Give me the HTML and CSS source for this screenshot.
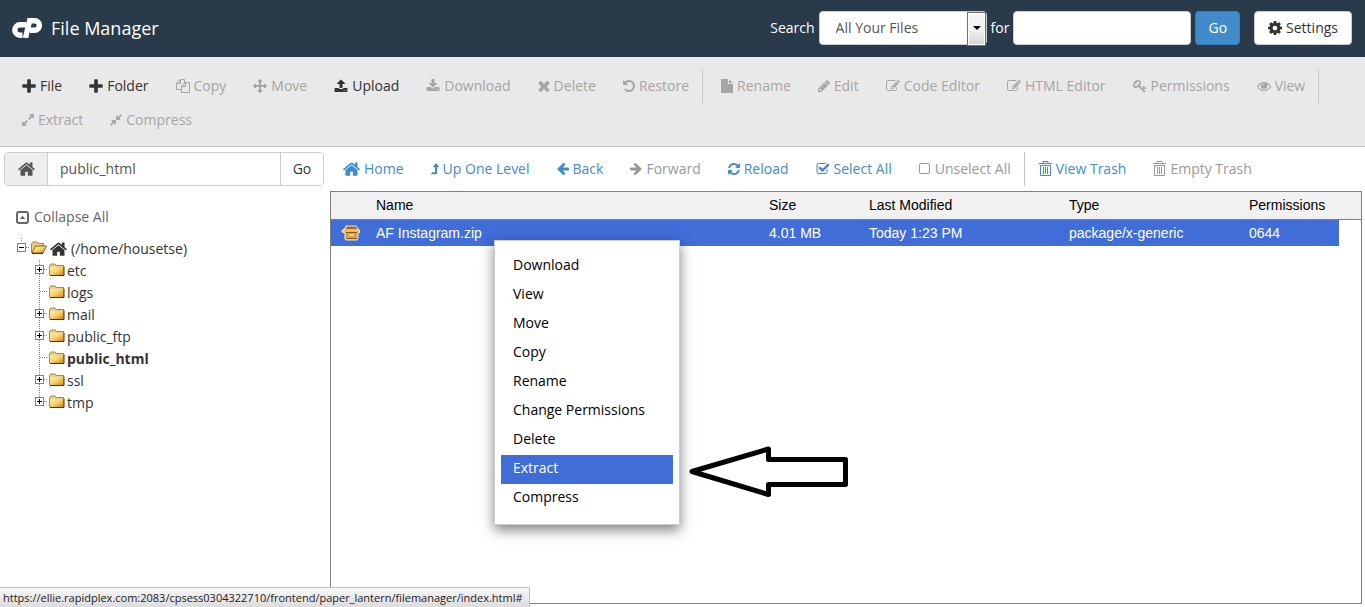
FILE: index.html
```
<!DOCTYPE html>
<html lang="en">
<head>
    <meta charset="UTF-8">
    <meta name="viewport" content="width=device-width, initial-scale=1.0">
    <title>File Manager</title>
    <link rel="stylesheet" href="styles.css">
</head>
<body>
    <!-- Icon sprite -->
    <svg class="sprite" aria-hidden="true">
        <defs>
            <linearGradient id="gold" x1="0" y1="0" x2="1" y2="1">
                <stop offset="0" stop-color="#fff3b0"/>
                <stop offset="0.5" stop-color="#f5cf6a"/>
                <stop offset="1" stop-color="#d08a10"/>
            </linearGradient>
        </defs>
        <symbol id="plus" viewBox="160 96 1472 1472"><path d="M1600 736v192q0 40-28 68t-68 28h-416v416q0 40-28 68t-68 28h-192q-40 0-68-28t-28-68v-416h-416q-40 0-68-28t-28-68v-192q0-40 28-68t68-28h416v-416q0-40 28-68t68-28h192q40 0 68 28t28 68v416h416q40 0 68 28t28 68z"/></symbol>
        <symbol id="copy" viewBox="0 0 1792 1792"><path d="M1696 384q40 0 68 28t28 68v1216q0 40-28 68t-68 28h-960q-40 0-68-28t-28-68v-288h-544q-40 0-68-28t-28-68v-672q0-40 20-88t48-76l408-408q28-28 76-48t88-20h416q40 0 68 28t28 68v328q68-40 128-40h416zm-544 213l-299 299h299v-299zm-640-384l-299 299h299v-299zm196 647l316-316v-416h-384v416q0 40-28 68t-68 28h-416v640h512v-256q0-40 20-88t48-76zm956 804v-1152h-384v416q0 40-28 68t-68 28h-416v640h896z"/></symbol>
        <symbol id="move" viewBox="0 0 1792 1792"><path d="M1792 896q0 26-19 45l-256 256q-19 19-45 19t-45-19-19-45v-128h-384v384h128q26 0 45 19t19 45-19 45l-256 256q-19 19-45 19t-45-19l-256-256q-19-19-19-45t19-45 45-19h128v-384h-384v128q0 26-19 45t-45 19-45-19l-256-256q-19-19-19-45t19-45l256-256q19-19 45-19t45 19 19 45v128h384v-384h-128q-26 0-45-19t-19-45 19-45l256-256q19-19 45-19t45 19l256 256q19 19 19 45t-19 45-45 19h-128v384h384v-128q0-26 19-45t45-19 45 19l256 256q19 19 19 45z"/></symbol>
        <symbol id="upload" viewBox="0 0 1792 1792"><path d="M1344 1472q0-26-19-45t-45-19-45 19-19 45 19 45 45 19 45-19 19-45zm256 0q0-26-19-45t-45-19-45 19-19 45 19 45 45 19 45-19 19-45zm128-224v320q0 40-28 68t-68 28h-1472q-40 0-68-28t-28-68v-320q0-40 28-68t68-28h427q21 56 70.5 92t110.5 36h256q61 0 110.5-36t70.5-92h427q40 0 68 28t28 68zm-325-648q-17 40-59 40h-256v448q0 26-19 45t-45 19h-256q-26 0-45-19t-19-45v-448h-256q-42 0-59-40-17-39 14-69l448-448q18-19 45-19t45 19l448 448q31 30 14 69z"/></symbol>
        <symbol id="download" viewBox="0 0 1792 1792"><path d="M1344 1344q0-26-19-45t-45-19-45 19-19 45 19 45 45 19 45-19 19-45zm256 0q0-26-19-45t-45-19-45 19-19 45 19 45 45 19 45-19 19-45zm128-224v320q0 40-28 68t-68 28h-1472q-40 0-68-28t-28-68v-320q0-40 28-68t68-28h465l135 136q58 56 136 56t136-56l136-136h464q40 0 68 28t28 68zm-325-569q17 41-14 70l-448 448q-18 19-45 19t-45-19l-448-448q-31-29-14-70 17-39 59-39h256v-448q0-26 19-45t45-19h256q26 0 45 19t19 45v448h256q42 0 59 39z"/></symbol>
        <symbol id="times" viewBox="280 160 1232 1500"><path d="M1490 1322q0 40-28 68l-136 136q-28 28-68 28t-68-28l-294-294-294 294q-28 28-68 28t-68-28l-136-136q-28-28-28-68t28-68l294-294-294-294q-28-28-28-68t28-68l136-136q28-28 68-28t68 28l294 294 294-294q28-28 68-28t68 28l136 136q28 28 28 68t-28 68l-294 294 294 294q28 28 28 68z"/></symbol>
        <symbol id="undo" viewBox="128 0 1536 1792"><path d="M1664 896q0 156-61 298t-164 245-245 164-298 61q-172 0-327-72.5t-264-204.5q-7-10-6.5-22.5t8.5-20.5l137-138q10-9 25-9 16 2 23 12 73 95 179 147t225 52q104 0 198.5-40.5t163.5-109.5 109.5-163.5 40.5-198.5-40.5-198.5-109.5-163.5-163.5-109.5-198.5-40.5q-98 0-188 35.5t-160 101.5l137 138q31 30 14 69-17 40-59 40h-448q-26 0-45-19t-19-45v-448q0-42 40-59 39-17 69 14l130 129q107-101 244.5-156.5t284.5-55.5q156 0 298 61t245 164 164 245 61 298z"/></symbol>
        <symbol id="file" viewBox="128 0 1536 1792"><path d="M1152 512v-472q22 14 36 28l408 408q14 14 28 36h-472zm-128 32q0 40 28 68t68 28h544v1056q0 40-28 68t-68 28h-1344q-40 0-68-28t-28-68v-1600q0-40 28-68t68-28h800v544z"/></symbol>
        <symbol id="pencil" viewBox="128 0 1536 1792"><path d="M491 1536l91-91-235-235-91 91v107h128v128h107zm523-928q0-22-22-22-10 0-17 7l-542 542q-7 7-7 17 0 22 22 22 10 0 17-7l542-542q7-7 7-17zm-54-192l416 416-832 832h-416v-416zm683 96q0 53-37 90l-166 166-416-416 166-165q36-38 90-38 53 0 91 38l235 234q37 39 37 91z"/></symbol>
        <symbol id="edit" viewBox="0 0 1792 1792"><path d="M888 1184l116-116-152-152-116 116v56h96v96h56zm440-720q-16-16-33 1l-350 350q-17 17-1 33t33-1l350-350q17-17 1-33zm80 594v190q0 119-84.5 203.5t-203.5 84.5h-832q-119 0-203.5-84.5t-84.5-203.5v-832q0-119 84.5-203.5t203.5-84.5h832q63 0 117 25 15 7 18 23 3 17-9 29l-49 49q-14 14-32 8-23-6-45-6h-832q-66 0-113 47t-47 113v832q0 66 47 113t113 47h832q66 0 113-47t47-113v-126q0-13 9-22l64-64q15-15 35-7t20 29zm-96-738l288 288-672 672h-288v-288zm444 132l-92 92-288-288 92-92q28-28 68-28t68 28l152 152q28 28 28 68t-28 68z"/></symbol>
        <symbol id="key" viewBox="0 0 1792 1792"><path d="M832 512q0-80-56-136t-136-56-136 56-56 136q0 42 19 83-41-19-83-19-80 0-136 56t-56 136 56 136 136 56 136-56 56-136q0-42-19-83 41 19 83 19 80 0 136-56t56-136zm851 704q0 17-49 66t-66 49q-9 0-28.5-16t-36.5-33-38.5-40-24.5-26l-96 96 220 220q28 28 28 68 0 42-39 81t-81 39q-40 0-68-28l-671-671q-176 131-365 131-163 0-265.5-102.5t-102.5-265.5q0-160 95-313t248-248 313-95q163 0 265.5 102.5t102.5 265.5q0 189-131 365l355 355 96-96q-3-3-26-24.5t-40-38.5-33-36.5-16-28.5q0-17 49-66t66-49q13 0 23 10 6 6 46 44.5t82 79.5 86.5 86 73 78 28.5 41z"/></symbol>
        <symbol id="eye" viewBox="0 0 1792 1792"><path d="M1664 960q-152-236-381-353 61 104 61 225 0 185-131.5 316.5t-316.5 131.5-316.5-131.5-131.5-316.5q0-121 61-225-229 117-381 353 133 205 333.5 326.5t434.5 121.5 434.5-121.5 333.5-326.5zm-720-384q0-20-14-34t-34-14q-125 0-214.5 89.5t-89.5 214.5q0 20 14 34t34 14 34-14 14-34q0-86 61-147t147-61q20 0 34-14t14-34zm848 384q0 34-20 69-140 230-376.5 368.5t-499.5 138.5-499.5-139-376.5-368q-20-35-20-69t20-69q140-229 376.5-368t499.5-139 499.5 139 376.5 368q20 35 20 69z"/></symbol>
        <symbol id="expand" viewBox="128 0 1536 1792"><path d="M883 1056q0 13-10 23l-332 332 144 144q19 19 19 45t-19 45-45 19h-448q-26 0-45-19t-19-45v-448q0-26 19-45t45-19 45 19l144 144 332-332q10-10 23-10t23 10l114 114q10 10 10 23zm781-864v448q0 26-19 45t-45 19-45-19l-144-144-332 332q-10 10-23 10t-23-10l-114-114q-10-10-10-23t10-23l332-332-144-144q-19-19-19-45t19-45 45-19h448q26 0 45 19t19 45z"/></symbol>
        <symbol id="compress" viewBox="128 0 1536 1792"><path d="M896 960v448q0 26-19 45t-45 19-45-19l-144-144-332 332q-10 10-23 10t-23-10l-114-114q-10-10-10-23t10-23l332-332-144-144q-19-19-19-45t19-45 45-19h448q26 0 45 19t19 45zm755-672q0 13-10 23l-332 332 144 144q19 19 19 45t-19 45-45 19h-448q-26 0-45-19t-19-45v-448q0-26 19-45t45-19 45 19l144 144 332-332q10-10 23-10t23 10l114 114q10 10 10 23z"/></symbol>
        <symbol id="cog" viewBox="128 128 1536 1536"><path d="M1152 896q0-106-75-181t-181-75-181 75-75 181 75 181 181 75 181-75 75-181zm512-109v222q0 12-8 23t-20 13l-185 28q-19 54-39 91 35 50 107 138 10 12 10 25t-9 23q-27 37-99 108t-94 71q-12 0-26-9l-138-108q-44 23-91 38-16 136-29 186-7 28-36 28h-222q-14 0-24.5-8.5t-11.5-21.5l-28-184q-49-16-90-37l-141 107q-10 9-25 9-14 0-25-11-126-114-165-168-7-10-7-23 0-12 8-23 15-21 51-66.5t54-70.5q-27-50-41-99l-183-27q-13-2-21-12.5t-8-23.5v-222q0-12 8-23t19-13l186-28q14-46 39-92-40-57-107-138-10-12-10-24 0-10 9-23 26-36 98.5-107.5t94.5-71.5q13 0 26 10l138 107q44-23 91-38 16-136 29-186 7-28 36-28h222q14 0 24.5 8.5t11.5 21.5l28 184q49 16 90 37l142-107q9-9 24-9 13 0 25 10 129 119 165 170 7 8 7 22 0 12-8 23-15 21-51 66.5t-54 70.5q26 50 41 98l183 28q13 2 21 12.5t8 23.5z"/></symbol>
        <symbol id="home" viewBox="80 160 1632 1440"><path d="M1472 992v480q0 26-19 45t-45 19h-384v-384h-256v384h-384q-26 0-45-19t-19-45v-480q0-1 .5-3t.5-3l575-474 575 474q1 2 1 6zm223-69l-62 74q-8 9-21 11h-3q-13 0-21-7l-692-577-692 577q-12 8-24 7-13-2-21-11l-62-74q-8-10-7-23.5t11-21.5l719-599q32-26 76-26t76 26l244 204v-195q0-14 9-23t23-9h192q14 0 23 9t9 23v408l219 182q10 8 11 21.5t-7 23.5z"/></symbol>
        <symbol id="level-up" viewBox="310 0 1030 1664"><path d="M1331 571q-18 37-58 37h-192v864q0 14-9 23t-23 9h-704q-21 0-29-18-8-20 4-35l160-192q9-11 25-11h320v-640h-192q-40 0-58-37-17-37 9-68l320-384q18-22 49-22t49 22l320 384q27 32 9 68z"/></symbol>
        <symbol id="arrow-left" viewBox="128 64 1536 1792"><path d="M1664 896v128q0 53-32.5 90.5t-84.5 37.5h-704l293 294q38 36 38 90t-38 90l-75 76q-37 37-90 37-52 0-91-37l-651-652q-37-37-37-90 0-52 37-91l651-650q38-38 91-38 52 0 90 38l75 74q38 38 38 91t-38 91l-293 293h704q52 0 84.5 37.5t32.5 90.5z"/></symbol>
        <symbol id="arrow-right" viewBox="128 64 1536 1792"><path d="M1600 960q0 54-37 91l-651 651q-39 37-91 37-51 0-90-37l-75-75q-38-38-38-91t38-91l293-293h-704q-52 0-84.5-37.5t-32.5-90.5v-128q0-53 32.5-90.5t84.5-37.5h704l-293-294q-38-36-38-90t38-90l75-75q38-38 90-38 53 0 91 38l651 651q37 35 37 90z"/></symbol>
        <symbol id="refresh" viewBox="128 0 1536 1792"><path d="M1639 1056q0 5-1 7-64 268-268 434.5t-478 166.5q-146 0-282.5-55t-243.5-157l-129 129q-19 19-45 19t-45-19-19-45v-448q0-26 19-45t45-19h448q26 0 45 19t19 45-19 45l-137 137q71 66 161 102t187 36q134 0 250-65t186-179q11-17 53-117 8-23 30-23h192q13 0 22.5 9.5t9.5 22.5zm25-800v448q0 26-19 45t-45 19h-448q-26 0-45-19t-19-45 19-45l138-138q-148-137-349-137-134 0-250 65t-186 179q-11 17-53 117-8 23-30 23h-199q-13 0-22.5-9.5t-9.5-22.5v-7q65-268 270-434.5t480-166.5q146 0 284 55.5t245 156.5l130-129q19-19 45-19t45 19 19 45z"/></symbol>
        <symbol id="check" viewBox="64 0 1664 1792"><path d="M1472 930v318q0 119-84.5 203.5t-203.5 84.5h-832q-119 0-203.5-84.5t-84.5-203.5v-832q0-119 84.5-203.5t203.5-84.5h832q63 0 117 25 15 7 18 23 3 17-9 29l-49 49q-10 10-23 10-3 0-9-2-23-6-45-6h-832q-66 0-113 47t-47 113v832q0 66 47 113t113 47h832q66 0 113-47t47-113v-254q0-13 9-22l64-64q10-10 23-10 6 0 12 3 20 8 20 29zm231-489l-814 814q-24 24-57 24t-57-24l-430-430q-24-24-24-57t24-57l110-110q24-24 57-24t57 24l263 263 647-647q24-24 57-24t57 24l110 110q24 24 24 57t-24 57z"/></symbol>
        <symbol id="square" viewBox="0 0 12 14"><rect x="0.5" y="1.5" width="10" height="10" rx="1.5" fill="none" stroke="currentColor"/></symbol>
        <symbol id="trash" viewBox="0 0 13 16"><path d="M4 2V.5h5V2M0 2.5h13M1 4.5h11" fill="none" stroke="currentColor"/><path d="M1.5 4v10.500h10V4M4.500 6v7M6.500 6v7M8.500 6v7" fill="none" stroke="currentColor"/></symbol>
        <symbol id="collapse" viewBox="0 0 13 13"><rect x="1" y="1" width="11" height="11" rx="2" fill="none" stroke="currentColor" stroke-width="2"/><path d="M3.8 8 6.5 4.8 9.2 8z"/></symbol>
        <symbol id="folder" viewBox="0 0 16 14"><path d="M.5 12V2.500L2 1h4l1.500 1.500h7V12z" fill="#e9cd83" stroke="#a8874a"/><path d="M1 4h13.500v8H1z" fill="url(#gold)"/><path d="M1 12.500h14V3.500" fill="none" stroke="#4c3408"/></symbol>
        <symbol id="folder-open" viewBox="0 0 16 14"><path d="M.5 12V2.500L2 1h4l1.500 1.500h5V5" fill="#e9cd83" stroke="#a8874a"/><path d="M1 12 4.500 5h11L12 12z" fill="url(#gold)" stroke="#8c6414"/><path d="M1 12.500h11" stroke="#4c3408"/></symbol>
        <symbol id="package" viewBox="0 0 20 16">
            <path d="M5 .5h10l2 2.500 2 2.500v2l-1.500 1V13l-1.500 2.500H5L3.500 14V8.500L.5 7V5.500L3.500 3z" fill="#f8e8c6"/>
            <path d="M4.500 4 6 1.500h9L16.500 4z" fill="#a9671d"/>
            <path d="M4 4h12.500l2 2.500-2 1H4L1.500 6.500z" fill="#efbb6c"/>
            <path d="M4.500 7.500h12v5.500l-1 1.500h-10l-1-1z" fill="#dc9f49"/>
            <path d="M4.500 7.500h12M5 13.500h11" stroke="#8f5712" fill="none"/>
            <path d="M8 9h5v2H8z" fill="#f3cd8c"/>
        </symbol>
        <symbol id="node-minus" viewBox="0 0 18 22"><path d="M9.500 0v4M14 9.500h4" stroke="#888" stroke-dasharray="1 1"/><rect x="5.500" y="5.500" width="8" height="8" fill="#fff" stroke="#808080"/><path d="M7 9.500h5" stroke="#000"/></symbol>
        <symbol id="node-plus" viewBox="0 0 18 22"><path d="M9.500 0v22M14 9.500h4" stroke="#888" stroke-dasharray="1 1"/><rect x="5.500" y="5.500" width="8" height="8" fill="#fff" stroke="#808080"/><path d="M7 9.500h5M9.500 7v5" stroke="#000"/></symbol>
        <symbol id="node-last" viewBox="0 0 18 22"><path d="M9.500 0v8M14 9.500h4" stroke="#888" stroke-dasharray="1 1"/><rect x="5.500" y="5.500" width="8" height="8" fill="#fff" stroke="#808080"/><path d="M7 9.500h5M9.500 7v5" stroke="#000"/></symbol>
        <symbol id="node-leaf" viewBox="0 0 18 22"><path d="M9.500 0v22M10 9.500h8" stroke="#888" stroke-dasharray="1 1"/></symbol>
    </svg>

    <header class="topbar">
        <svg class="logo" viewBox="0 0 30 20" role="img" aria-label="cPanel">
            <path d="M14 6.800H8a5.200 5.200 0 0 0 0 10.400h2.500" fill="none" stroke="#fff" stroke-width="5.400"/>
            <path d="M13.500 20 17.600 2.700h5a4.800 4.800 0 0 1 0 9.600H18" fill="none" stroke="#fff" stroke-width="5.400"/>
        </svg>
        <h1 class="app-title">File Manager</h1>
        <form class="search">
            <label for="search-scope">Search</label>
            <span class="select-wrap">
                <select id="search-scope">
                    <option>All Your Files</option>
                </select>
            </span>
            <label for="search-text">for</label>
            <input id="search-text" class="search-text" type="text">
            <button type="button" class="btn btn-primary">Go</button>
        </form>
        <button type="button" class="btn btn-settings"><svg class="icon"><use href="#cog"/></svg>Settings</button>
    </header>

    <!-- Main actions -->
    <div class="toolbar">
        <button class="tool"><svg class="icon"><use href="#plus"/></svg>File</button>
        <button class="tool"><svg class="icon"><use href="#plus"/></svg>Folder</button>
        <button class="tool" disabled><svg class="icon"><use href="#copy"/></svg>Copy</button>
        <button class="tool" disabled><svg class="icon"><use href="#move"/></svg>Move</button>
        <button class="tool"><svg class="icon"><use href="#upload"/></svg>Upload</button>
        <button class="tool" disabled><svg class="icon"><use href="#download"/></svg>Download</button>
        <button class="tool" disabled><svg class="icon icon-narrow"><use href="#times"/></svg>Delete</button>
        <button class="tool tool-last" disabled><svg class="icon icon-narrow"><use href="#undo"/></svg>Restore</button>
        <button class="tool" disabled><svg class="icon icon-narrow"><use href="#file"/></svg>Rename</button>
        <button class="tool" disabled><svg class="icon icon-narrow"><use href="#pencil"/></svg>Edit</button>
        <button class="tool" disabled><svg class="icon"><use href="#edit"/></svg>Code Editor</button>
        <button class="tool" disabled><svg class="icon"><use href="#edit"/></svg>HTML Editor</button>
        <button class="tool" disabled><svg class="icon"><use href="#key"/></svg>Permissions</button>
        <button class="tool tool-last" disabled><svg class="icon"><use href="#eye"/></svg>View</button>
        <button class="tool" disabled><svg class="icon icon-narrow"><use href="#expand"/></svg>Extract</button>
        <button class="tool" disabled><svg class="icon icon-narrow"><use href="#compress"/></svg>Compress</button>
    </div>

    <div class="workspace">
        <aside class="sidebar">
            <form class="path-form">
                <button type="button" class="path-home" aria-label="Home directory"><svg class="icon icon-home"><use href="#home"/></svg></button>
                <input class="path-input" type="text" value="public_html" aria-label="Path">
                <button type="button" class="path-go">Go</button>
            </form>
            <a class="collapse" href="#"><svg class="icon icon-collapse"><use href="#collapse"/></svg>Collapse All</a>

            <ul class="tree">
                <li>
                    <a class="node" href="#"><svg class="joint"><use href="#node-minus"/></svg><svg class="folder"><use href="#folder-open"/></svg><svg class="icon icon-home root-home"><use href="#home"/></svg>(/home/housetse)</a>
                    <ul>
                        <li><a class="node" href="#"><svg class="joint"><use href="#node-plus"/></svg><svg class="folder"><use href="#folder"/></svg>etc</a></li>
                        <li><a class="node" href="#"><svg class="joint"><use href="#node-leaf"/></svg><svg class="folder"><use href="#folder"/></svg>logs</a></li>
                        <li><a class="node" href="#"><svg class="joint"><use href="#node-plus"/></svg><svg class="folder"><use href="#folder"/></svg>mail</a></li>
                        <li><a class="node" href="#"><svg class="joint"><use href="#node-plus"/></svg><svg class="folder"><use href="#folder"/></svg>public_ftp</a></li>
                        <li><a class="node node-current" href="#"><svg class="joint"><use href="#node-leaf"/></svg><svg class="folder"><use href="#folder"/></svg>public_html</a></li>
                        <li><a class="node" href="#"><svg class="joint"><use href="#node-plus"/></svg><svg class="folder"><use href="#folder"/></svg>ssl</a></li>
                        <li><a class="node" href="#"><svg class="joint"><use href="#node-last"/></svg><svg class="folder"><use href="#folder"/></svg>tmp</a></li>
                    </ul>
                </li>
            </ul>
        </aside>

        <main class="content">
            <nav class="nav">
                <a class="nav-link" href="#"><svg class="icon icon-home"><use href="#home"/></svg>Home</a>
                <a class="nav-link" href="#"><svg class="icon icon-up"><use href="#level-up"/></svg>Up One Level</a>
                <a class="nav-link" href="#"><svg class="icon icon-narrow"><use href="#arrow-left"/></svg>Back</a>
                <a class="nav-link nav-off" href="#"><svg class="icon icon-narrow"><use href="#arrow-right"/></svg>Forward</a>
                <a class="nav-link" href="#"><svg class="icon icon-narrow"><use href="#refresh"/></svg>Reload</a>
                <a class="nav-link" href="#"><svg class="icon"><use href="#check"/></svg>Select All</a>
                <a class="nav-link nav-off nav-last" href="#"><svg class="icon icon-narrow"><use href="#square"/></svg>Unselect All</a>
                <a class="nav-link" href="#"><svg class="icon icon-trash"><use href="#trash"/></svg>View Trash</a>
                <a class="nav-link nav-off" href="#"><svg class="icon icon-trash"><use href="#trash"/></svg>Empty Trash</a>
            </nav>

            <div class="files">
                <table class="file-table">
                    <colgroup>
                        <col class="col-icon">
                        <col>
                        <col class="col-size">
                        <col class="col-modified">
                        <col class="col-type">
                        <col class="col-perms">
                        <col class="col-scroll">
                    </colgroup>
                    <thead>
                        <tr><th></th><th>Name</th><th>Size</th><th>Last Modified</th><th>Type</th><th>Permissions</th><th></th></tr>
                    </thead>
                    <tbody>
                        <tr class="selected">
                            <td class="file-icon"><svg class="package"><use href="#package"/></svg></td>
                            <td>AF Instagram.zip</td>
                            <td>4.01 MB</td>
                            <td>Today 1:23 PM</td>
                            <td>package/x-generic</td>
                            <td>0644</td>
                            <td class="scroll-gap"></td>
                        </tr>
                    </tbody>
                </table>

                <!-- Right-click menu -->
                <div class="context-menu" role="menu">
                    <button role="menuitem">Download</button>
                    <button role="menuitem">View</button>
                    <button role="menuitem">Move</button>
                    <button role="menuitem">Copy</button>
                    <button role="menuitem">Rename</button>
                    <button role="menuitem">Change Permissions</button>
                    <button role="menuitem">Delete</button>
                    <button role="menuitem" class="active">Extract</button>
                    <button role="menuitem">Compress</button>
                </div>
                <svg class="pointer" viewBox="0 0 160 52" aria-hidden="true">
                    <path d="M4 25.500 80.500 3V13.500H157.500V38.500H80.500V48.500Z" fill="#fff" stroke="#000" stroke-width="5" stroke-linejoin="round"/>
                </svg>
            </div>
        </main>
    </div>

    <div class="status">https://ellie.rapidplex.com:2083/cpsess0304322710/frontend/paper_lantern/filemanager/index.html#</div>
</body>
</html>
```
FILE: styles.css
```
* {
    box-sizing: border-box;
}

body {
    margin: 0;
    height: 100vh;
    display: flex;
    flex-direction: column;
    overflow: hidden;
    background: #fff;
    color: #333;
    font-family: "Open Sans", "Noto Sans", sans-serif;
    font-size: 14px;
    line-height: 20px;
}

button, input, select {
    font: inherit;
    color: inherit;
    margin: 0;
}

a {
    color: inherit;
    text-decoration: none;
}

ul {
    list-style: none;
    margin: 0;
    padding: 0;
}

.sprite {
    position: absolute;
    width: 0;
    height: 0;
}

.icon {
    width: 14px;
    height: 14px;
    flex: none;
    fill: currentColor;
}

.icon-narrow {
    width: 12px;
}

.icon-up {
    width: 8px;
}

.icon-home {
    width: 17px;
    height: 16px;
}

.icon-trash {
    width: 13px;
    height: 16px;
}

.icon-collapse {
    width: 13px;
    height: 13px;
}

/* Header */
.topbar {
    display: flex;
    align-items: center;
    height: 57px;
    padding: 0 13px 2px 12px;
    background: #293a4a;
    color: #fff;
}

.logo {
    width: 30px;
    height: 20px;
}

.app-title {
    margin: 0 auto 0 9px;
    font-size: 18px;
    font-weight: 400;
}

.search {
    display: flex;
    align-items: center;
    gap: 4px;
    margin-right: 14px;
}

.select-wrap {
    position: relative;
    width: 168px;
}

.select-wrap select {
    width: 100%;
    height: 34px;
    padding: 0 16px;
    border: 1px solid #ccc;
    border-radius: 4px;
    background: #fff;
    color: #555;
    appearance: none;
}

/* drop-down button */
.select-wrap::before {
    content: "";
    position: absolute;
    top: 1px;
    right: 1px;
    width: 17px;
    height: 32px;
    border: 1px solid #707070;
    background: linear-gradient(#f4f4f4 50%, #d4d4d4);
    box-shadow: inset 0 0 0 1px #fff;
    pointer-events: none;
}

.select-wrap::after {
    content: "";
    position: absolute;
    top: 15px;
    right: 6px;
    border: 4px solid transparent;
    border-top-color: #000;
    border-bottom: 0;
    pointer-events: none;
}

.search-text {
    width: 178px;
    height: 34px;
    padding: 0 12px;
    border: 1px solid #ccc;
    border-radius: 4px;
    background: #fff;
    color: #555;
}

.btn {
    display: flex;
    align-items: center;
    gap: 4px;
    height: 34px;
    padding: 0 12px;
    border: 1px solid #ccc;
    border-radius: 4px;
    background: #fff;
    color: #333;
}

.btn-primary {
    background: #428bca;
    border-color: #357ebd;
    color: #fff;
}

.btn-settings {
    padding: 0 13px;
}

/* Action bar */
.toolbar {
    display: flex;
    flex-wrap: wrap;
    column-gap: 1px;
    padding: 12px 9px 9px;
    background: #e9e9e9;
    border-bottom: 1px solid #c5c5c5;
}

.tool {
    display: flex;
    align-items: center;
    gap: 4px;
    height: 34px;
    padding: 0 13px;
    border: 0;
    background: none;
}

.tool:disabled {
    color: #a5a5a5;
}

.tool-last {
    margin-right: 4px;
    border-right: 1px solid #c5c5c5;
}

.workspace {
    display: flex;
    flex: 1;
    min-height: 0;
    padding-top: 5px;
}

/* Sidebar */
.sidebar {
    flex: 0 0 330px;
}

.path-form {
    display: flex;
    height: 34px;
    margin: 0 6px 0 4px;
    border: 1px solid #ccc;
    border-radius: 4px;
    overflow: hidden;
}

.path-home {
    width: 43px;
    padding: 0;
    border: 0;
    border-right: 1px solid #ccc;
    background: #eee;
    color: #555;
}

.path-home .icon {
    display: block;
    margin: 0 auto;
}

.path-input {
    flex: 1;
    min-width: 0;
    padding: 0 12px;
    border: 0;
    color: #555;
}

.path-go {
    width: 43px;
    padding: 0;
    border: 0;
    border-left: 1px solid #ccc;
    background: #fff;
}

.collapse {
    display: flex;
    align-items: center;
    gap: 5px;
    margin: 21px 16px 11px;
    color: #666;
}

.tree {
    padding-left: 12px;
}

.tree ul {
    padding-left: 18px;
}

.node {
    display: flex;
    height: 22px;
    line-height: 22px;
}

.node-current {
    font-weight: 700;
}

.joint {
    width: 18px;
    height: 22px;
    flex: none;
}

.folder {
    width: 16px;
    height: 14px;
    margin: 3px 2px 0 1px;
    flex: none;
}

.root-home {
    margin: 3px 4px 0 1px;
}

/* File list */
.content {
    flex: 1;
    min-width: 0;
    display: flex;
    flex-direction: column;
    padding: 0 3px 3px 0;
}

.nav {
    display: flex;
    flex-wrap: wrap;
    column-gap: 1px;
    margin-bottom: 5px;
}

.nav-link {
    display: flex;
    align-items: center;
    gap: 4px;
    height: 34px;
    padding: 0 13px;
    color: #428bca;
}

.nav-off {
    color: #999;
}

.nav-last {
    border-right: 1px solid #c5c5c5;
}

.files {
    position: relative;
    flex: 1;
    border: 1px solid #808080;
}

.file-table {
    width: 100%;
    table-layout: fixed;
    border-collapse: collapse;
    font-family: "Liberation Sans", Arial, sans-serif;
    color: #000;
}

.file-table th,
.file-table td {
    height: 27px;
    padding: 0;
    text-align: left;
    font-weight: 400;
}

.file-table th {
    background: #f1f1f1;
    border-bottom: 1px solid #808080;
}

.selected td {
    background: #416dd9;
    color: #fff;
}

.selected .scroll-gap {
    background: #fff;
}

.file-icon {
    line-height: 0;
}

.package {
    width: 20px;
    height: 16px;
    margin-left: 10px;
}

.col-icon {
    width: 45px;
}

.col-size {
    width: 100px;
}

.col-modified {
    width: 200px;
}

.col-type {
    width: 180px;
}

.col-perms {
    width: 90px;
}

.col-scroll {
    width: 22px;
}

.context-menu {
    position: absolute;
    left: 163px;
    top: 48px;
    width: 186px;
    padding: 11px 6px;
    border: 1px solid #ccc;
    background: #fff;
    box-shadow: 0 5px 12px rgba(0, 0, 0, 0.5);
}

.context-menu button {
    display: block;
    width: 100%;
    height: 29px;
    padding: 0 12px 3px;
    border: 0;
    background: none;
    color: #000;
    text-align: left;
}

.context-menu .active {
    background: #416dd9;
    color: #fff;
}

.pointer {
    position: absolute;
    left: 357px;
    top: 254px;
    width: 160px;
    height: 52px;
}

/* Browser link status */
.status {
    position: fixed;
    left: 0;
    bottom: 0;
    height: 20px;
    padding: 0 6px 0 3px;
    border: 1px solid #c0c0c0;
    border-width: 1px 1px 0 0;
    background: linear-gradient(#f8f8f8, #dcdcdc);
    font-size: 11px;
    color: #222;
}
```
